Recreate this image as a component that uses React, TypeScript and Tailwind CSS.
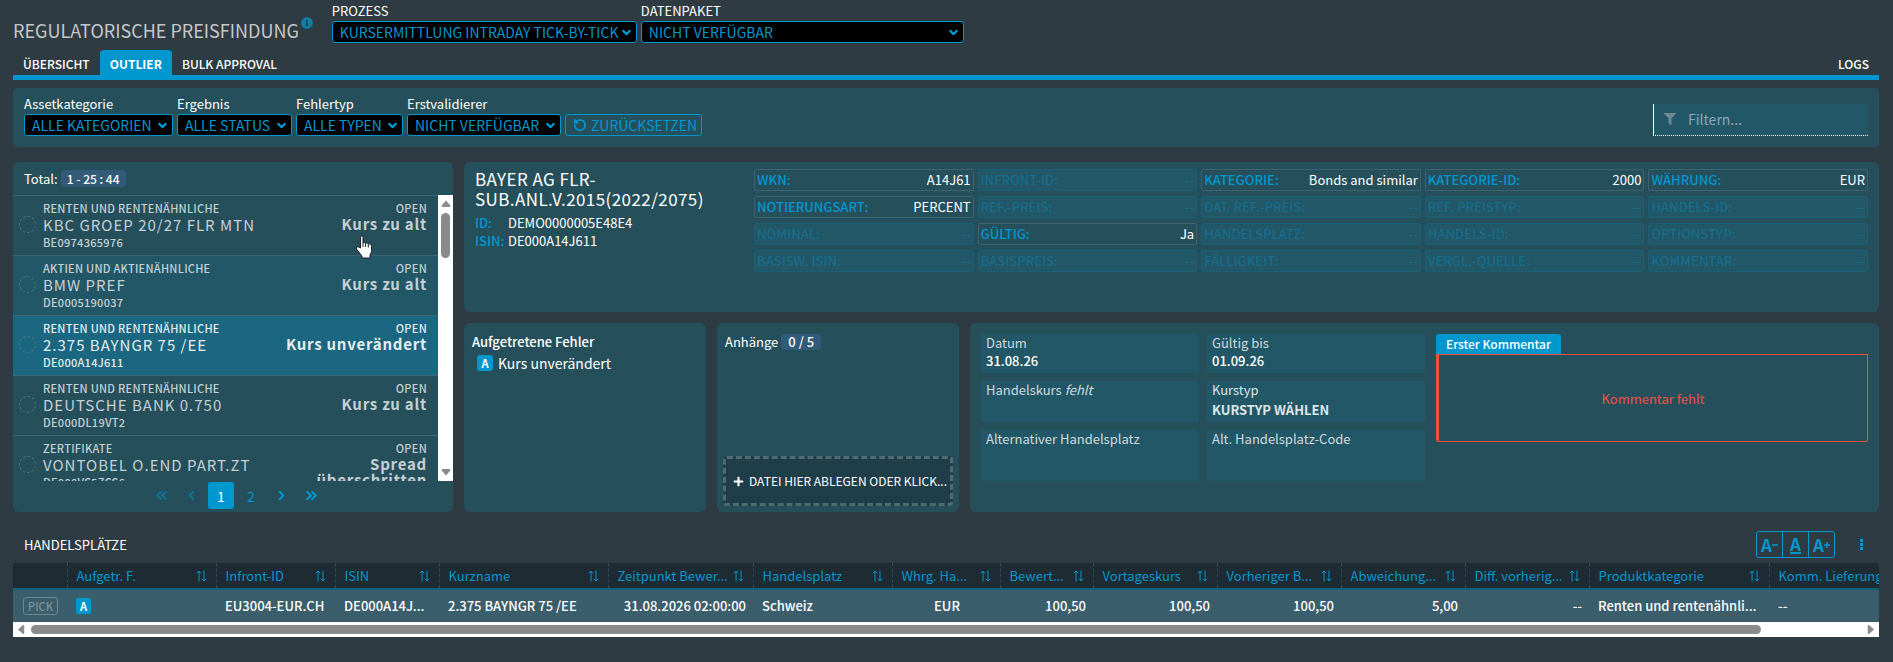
import { useState } from "react";
import type { ReactNode } from "react";
import { clsx } from "clsx";
import { ChevronDown, ChevronLeft, ChevronRight, ChevronsLeft, ChevronsRight, RotateCcw } from "lucide-react";
import { FaFilter, FaInfoCircle, FaPlus } from "react-icons/fa";

const items = [
  { category: "RENTEN UND RENTENÄHNLICHE", name: "KBC GROEP 20/27 FLR MTN", isin: "BE0974365976", error: "Kurs zu alt", tone: "plain" },
  { category: "AKTIEN UND AKTIENÄHNLICHE", name: "BMW PREF", isin: "DE0005190037", error: "Kurs zu alt", tone: "stripe" },
  { category: "RENTEN UND RENTENÄHNLICHE", name: "2.375 BAYNGR 75 /EE", isin: "DE000A14J611", error: "Kurs unverändert", tone: "active" },
  { category: "RENTEN UND RENTENÄHNLICHE", name: "DEUTSCHE BANK 0.750", isin: "DE000DL19VT2", error: "Kurs zu alt", tone: "plain" },
  { category: "ZERTIFIKATE", name: "VONTOBEL O.END PART.ZT", isin: "DE000VS5ZCS6", error: "Spread überschritten", tone: "plain" },
];

const facts = [
  ["WKN", "A14J61"],
  ["INFRONT-ID", ""],
  ["KATEGORIE", "Bonds and similar"],
  ["KATEGORIE-ID", "2000"],
  ["WÄHRUNG", "EUR"],
  ["NOTIERUNGSART", "PERCENT"],
  ["REF.-PREIS", ""],
  ["DAT. REF.-PREIS", ""],
  ["REF. PREISTYP", ""],
  ["HANDELS-ID", ""],
  ["NOMINAL", ""],
  ["GÜLTIG", "Ja"],
  ["HANDELSPLATZ", ""],
  ["HANDELS-ID", ""],
  ["OPTIONSTYP", ""],
  ["BASISW. ISIN", ""],
  ["BASISPREIS", ""],
  ["FÄLLIGKEIT", ""],
  ["VERGL.-QUELLE", ""],
  ["KOMMENTAR", ""],
];

const columns = [
  { title: "Aufgetr. F.", width: "w-[149px]", align: "text-left", value: "A" },
  { title: "Infront-ID", width: "w-[119px]", align: "text-left", value: "EU3004-EUR.CH" },
  { title: "ISIN", width: "w-[104px]", align: "text-left", value: "DE000A14J..." },
  { title: "Kurzname", width: "w-[169px]", align: "text-left", value: "2.375 BAYNGR 75 /EE" },
  { title: "Zeitpunkt Bewer...", width: "w-[145px]", align: "text-right", value: "31.08.2026 02:00:00" },
  { title: "Handelsplatz", width: "w-[139px]", align: "text-left", value: "Schweiz" },
  { title: "Whrg. Ha...", width: "w-[108px]", align: "text-center", value: "EUR" },
  { title: "Bewert...", width: "w-[93px]", align: "text-right", value: "100,50" },
  { title: "Vortageskurs", width: "w-[124px]", align: "text-right", value: "100,50" },
  { title: "Vorheriger B...", width: "w-[124px]", align: "text-right", value: "100,50" },
  { title: "Abweichung...", width: "w-[124px]", align: "text-right", value: "5,00" },
  { title: "Diff. vorherig...", width: "w-[124px]", align: "text-right", value: "--" },
  { title: "Produktkategorie", width: "w-[180px]", align: "text-left", value: "Renten und rentenähnli..." },
  { title: "Komm. Lieferung", width: "w-[180px]", align: "text-left", value: "--" },
];

function Dropdown({ id, label, value, className }: { id: string; label: string; value: string; className: string }) {
  return (
    <div className={clsx("flex flex-col", className)}>
      <label htmlFor={id} className="h-5 text-[13px] leading-[19px]">
        {label}
      </label>
      <div className="relative">
        <select
          id={id}
          className="block h-[22px] w-full appearance-none rounded-[3px] border border-[#0097cf] bg-black pr-3 pl-[7px] text-sm leading-5 text-[#0097cf]"
        >
          <option>{value}</option>
        </select>
        <ChevronDown size={13} strokeWidth={4} className="pointer-events-none absolute top-[5px] right-1 text-[#0097cf]" />
      </div>
    </div>
  );
}

function Tab({ active, children, onClick }: { active?: boolean; children: ReactNode; onClick?: () => void }) {
  return (
    <button
      type="button"
      onClick={onClick}
      className={clsx(
        "h-[25px] rounded-t px-[10px] pt-[3px] text-xs leading-5",
        active ? "bg-[#0097cf] font-bold" : "font-medium",
      )}
    >
      {children}
    </button>
  );
}

function Arrow({ className }: { className?: string }) {
  return (
    <svg viewBox="0 0 10 7" className={clsx("h-[7px] w-[10px] shrink-0 fill-[#8b8b8b]", className)}>
      <path d="M5 0.4 9.4 5.5Q9.6 6.8 8.4 7H1.6Q0.4 6.8 0.6 5.5Z" />
    </svg>
  );
}

function SortIcon() {
  return (
    <svg viewBox="0 0 11 12" className="h-3 w-[11px] shrink-0 fill-none stroke-[#0097cf]">
      <path d="M3 11.5V1M0.8 3.4 3 1 5.2 3.4M8 0.5V11M5.8 8.6 8 11 10.2 8.6" />
    </svg>
  );
}

function ItemList() {
  return (
    <section className="flex w-[440px] shrink-0 flex-col overflow-hidden rounded-md bg-[#264f5c]">
      <div className="flex h-[33px] items-center gap-[3px] px-[11px] text-[13px]">
        <span>Total:</span>
        <span className="rounded-[3px] bg-[#315b78] px-[6px] text-xs leading-[17px] font-medium">1 - 25 : 44</span>
      </div>
      <div className="flex h-[286px]">
        <ul className="min-w-0 flex-1 overflow-hidden">
          {items.map((item) => (
            <li
              key={item.isin}
              className={clsx(
                "flex h-[60px] gap-[7px] border-t border-[#3d6776] pt-1 pr-[11px] pl-[6px]",
                item.tone === "plain" && "bg-[#264f5c] text-[#c5d0d4]",
                item.tone === "stripe" && "bg-[#225767] text-[#c5d0d4]",
                item.tone === "active" && "bg-[#1b6680] text-[#e4edf0]",
              )}
            >
              <input
                type="checkbox"
                aria-label={item.name}
                className="mt-4 size-[17px] shrink-0 appearance-none rounded-full border border-dashed border-[#4d7684]"
              />
              <div className="min-w-0 flex-1">
                <div className="text-[11px] leading-4 font-medium tracking-wide">{item.category}</div>
                <div className="text-[15px] leading-[18px] tracking-[1px] whitespace-nowrap">{item.name}</div>
                <div className="text-[11px] leading-4 font-medium tracking-wide">{item.isin}</div>
              </div>
              <div className="w-[150px] text-right">
                <div className="text-[11px] leading-4 font-medium tracking-wide">OPEN</div>
                <div className="text-[15px] leading-4 font-bold tracking-wider">{item.error}</div>
              </div>
            </li>
          ))}
        </ul>
        <div className="flex w-[15px] flex-col items-center justify-between bg-white py-[5px]">
          <div className="flex flex-col items-center gap-[6px]">
            <Arrow />
            <div className="h-[45px] w-[9px] rounded-full bg-[#8b8b8b]" />
          </div>
          <Arrow className="rotate-180" />
        </div>
      </div>
      <nav aria-label="Seiten" className="flex h-[31px] items-center justify-center gap-1 pb-[2px] pl-[6px] text-sm text-[#0097cf]">
        <button type="button" aria-label="Erste Seite" className="flex w-[26px] justify-center opacity-50">
          <ChevronsLeft size={17} strokeWidth={3} />
        </button>
        <button type="button" aria-label="Vorherige Seite" className="flex w-[26px] justify-center opacity-50">
          <ChevronLeft size={15} strokeWidth={3} />
        </button>
        <button type="button" className="h-[27px] w-[26px] rounded-[3px] bg-[#0097cf] text-white">
          1
        </button>
        <button type="button" className="h-[27px] w-[26px]">
          2
        </button>
        <button type="button" aria-label="Nächste Seite" className="flex w-[26px] justify-center">
          <ChevronRight size={15} strokeWidth={3} />
        </button>
        <button type="button" aria-label="Letzte Seite" className="flex w-[26px] justify-center">
          <ChevronsRight size={17} strokeWidth={3} />
        </button>
      </nav>
    </section>
  );
}

function Details() {
  return (
    <section className="flex h-[150px] rounded-md bg-[#264f5c] px-[11px] pt-[7px]">
      <div className="w-[279px] shrink-0">
        <h2 className="w-[240px] text-[17px] leading-5 tracking-wide">BAYER AG FLR-SUB.ANL.V.2015(2022/2075)</h2>
        <dl className="mt-[5px] grid grid-cols-[33px_1fr] text-[13px] leading-[18px]">
          <dt className="font-medium text-[#0097cf]">ID:</dt>
          <dd>DEMO0000005E48E4</dd>
          <dt className="font-medium text-[#0097cf]">ISIN:</dt>
          <dd>DE000A14J611</dd>
        </dl>
      </div>
      <dl className="grid min-w-0 flex-1 grid-cols-5 content-start gap-x-1 gap-y-[5px] text-[13px]">
        {facts.map(([label, value], i) => (
          <div
            key={i}
            className={clsx(
              "flex h-[22px] items-center justify-between rounded-[2px] border px-[2px] leading-5 whitespace-nowrap",
              value ? "border-[#3e6270]" : "border-[#1b6079] bg-[#225767] text-[#196c8a]",
            )}
          >
            <dt className={clsx("font-medium", value && "text-[#0097cf]")}>{label}:</dt>
            <dd>{value || "--"}</dd>
          </div>
        ))}
      </dl>
    </section>
  );
}

function Field({ id, label, hint, value, className }: { id: string; label: string; hint?: string; value?: string; className: string }) {
  return (
    <div className={clsx("rounded-[3px] bg-[#225767] px-[5px]", className)}>
      <label htmlFor={id} className="block text-[13px] leading-[18px] text-[#d0dade]">
        {label} {hint && <i>{hint}</i>}
      </label>
      <input id={id} defaultValue={value} className="block h-[18px] w-full bg-transparent text-[13px] leading-[18px] font-medium" />
    </div>
  );
}

function Editor() {
  return (
    <div className="flex h-[189px] gap-[11px]">
      <section className="w-[242px] shrink-0 rounded-md bg-[#264f5c] px-2 pt-[9px]">
        <h3 className="text-[13px] leading-5 font-medium">Aufgetretene Fehler</h3>
        <div className="flex items-center gap-[5px] px-[5px] text-sm leading-[22px]">
          <span className="size-4 rounded-[3px] bg-[#0097cf] text-center text-[11px] leading-4 font-bold">A</span>
          Kurs unverändert
        </div>
      </section>

      <section className="flex w-[242px] shrink-0 flex-col justify-between rounded-md bg-[#264f5c] px-[6px] pt-[9px] pb-[6px]">
        <div className="flex items-center gap-[3px] px-[2px] text-[13px] leading-5">
          <h3>Anhänge</h3>
          <span className="rounded-[3px] bg-[#315b78] px-[7px] leading-4 font-medium">0 / 5</span>
        </div>
        <button
          type="button"
          className="flex h-[50px] items-center gap-[5px] rounded border-[3px] border-dashed border-[#4f6a73] bg-[#1f3e4a] px-[7px] text-xs whitespace-nowrap"
        >
          <FaPlus size={11} className="shrink-0" />
          DATEI HIER ABLEGEN ODER KLICK...
        </button>
      </section>

      <section className="grid min-w-0 flex-1 grid-cols-[444fr_432fr] items-start gap-[11px] rounded-md bg-[#264f5c] p-[11px]">
        <div className="grid grid-cols-2 gap-2">
          <Field id="datum" label="Datum" value="31.08.26" className="h-[39px]" />
          <Field id="gueltig" label="Gültig bis" value="01.09.26" className="h-[39px]" />
          <Field id="kurs" label="Handelskurs" hint="fehlt" className="h-[41px]" />
          <div className="h-[41px] rounded-[3px] bg-[#225767] px-[5px]">
            <label htmlFor="kurstyp" className="block text-[13px] leading-[18px] text-[#dde6e9]">
              Kurstyp
            </label>
            <select id="kurstyp" className="block h-[22px] w-full appearance-none text-[13px] leading-[22px] font-bold text-[#dde6e9]">
              <option>KURSTYP WÄHLEN</option>
            </select>
          </div>
          <Field id="alt" label="Alternativer Handelsplatz" className="h-[51px]" />
          <Field id="code" label="Alt. Handelsplatz-Code" className="h-[51px]" />
        </div>
        <div className="flex flex-col items-start">
          <label htmlFor="kommentar" className="h-5 rounded-t-[3px] bg-[#0097cf] px-[10px] text-xs leading-5 font-medium">
            Erster Kommentar
          </label>
          <textarea
            id="kommentar"
            placeholder="Kommentar fehlt"
            className="block h-[88px] w-full resize-none rounded-b-[3px] border border-l-[3px] border-[#f2503f] py-[34px] text-center text-[13px] leading-5 placeholder:text-[#f2503f]"
          />
        </div>
      </section>
    </div>
  );
}

function Venues() {
  return (
    <section className="mt-4">
      <div className="mb-[2px] flex h-[33px] items-center justify-between pr-[14px] pl-[11px]">
        <h2 className="text-[13px] leading-5">HANDELSPLÄTZE</h2>
        <div className="flex items-center gap-[22px] text-[#0097cf]">
          <div className="flex h-[27px] divide-x divide-[#0097cf] rounded-[3px] border border-[#0097cf] text-[17px] leading-6 font-bold">
            <button type="button" aria-label="Schrift kleiner" className="flex w-[26px] items-center justify-center">
              A
              <svg viewBox="0 0 6 6" className="size-[6px] stroke-current stroke-[1.6]">
                <path d="M0 3H6" />
              </svg>
            </button>
            <button type="button" aria-label="Schrift normal" className="flex w-[26px] items-center justify-center">
              <span className="h-[18px] border-b-2 leading-[15px]">A</span>
            </button>
            <button type="button" aria-label="Schrift größer" className="flex w-[25px] items-center justify-center">
              A
              <svg viewBox="0 0 6 6" className="size-[6px] stroke-current stroke-[1.6]">
                <path d="M0 3H6M3 0V6" />
              </svg>
            </button>
          </div>
          <button type="button" aria-label="Menü" className="flex w-2 flex-col items-center gap-px">
            <span className="size-[3px] bg-current" />
            <span className="size-[3px] bg-current" />
            <span className="size-[3px] bg-current" />
          </button>
        </div>
      </div>
      <div className="overflow-hidden">
        <table className="w-[1936px] table-fixed border-collapse text-[13px]">
          <thead className="bg-[#1e2b33] text-[#0097cf]">
            <tr className="h-[26px] border-b-2 border-[#105f78]">
              <th className="w-[54px]" />
              {columns.map((c) => (
                <th key={c.title} className={clsx("border-l border-dashed border-l-[#24505f] px-[9px] font-normal", c.width)}>
                  <div className="flex items-center justify-between gap-1">
                    <span className="leading-5 whitespace-nowrap">{c.title}</span>
                    <SortIcon />
                  </div>
                </th>
              ))}
            </tr>
          </thead>
          <tbody>
            <tr className="h-[33px] bg-[#3a5e6b] font-medium">
              <td className="pl-[10px]">
                <button type="button" disabled className="h-[18px] w-[35px] rounded-[3px] border border-[#6f8891] text-[11px] leading-4 text-[#7c939b]">
                  PICK
                </button>
              </td>
              {columns.map((c) => (
                <td key={c.title} className={clsx("pr-[7px] pl-[9px] leading-5 whitespace-nowrap", c.align)}>
                  {c.value === "A" ? (
                    <span className="block w-[15px] rounded-[2px] bg-[#0097cf] text-center text-[11px] leading-4 font-bold">A</span>
                  ) : (
                    c.value
                  )}
                </td>
              ))}
            </tr>
          </tbody>
        </table>
      </div>
      <div className="flex h-[15px] items-center gap-[5px] bg-white px-[3px]">
        <Arrow className="-rotate-90" />
        <div className="mr-[100px] h-[9px] flex-1 rounded-full bg-[#8b8b8b]" />
        <Arrow className="rotate-90" />
      </div>
    </section>
  );
}

export default function App() {
  const [tab, setTab] = useState("OUTLIER");

  return (
    <div className="relative min-h-screen bg-[#2f3b42] pr-[14px] pb-4 pl-[13px] font-['Noto_Sans_CJK_SC','Noto_Sans',sans-serif] text-white">
      <header className="flex h-[50px] items-start gap-[19px] pt-px">
        <div className="flex gap-[2px] pt-4">
          <h1 className="text-[18px] leading-[26px] text-[#c4c8ca]">REGULATORISCHE PREISFINDUNG</h1>
          <FaInfoCircle size={12} className="text-[#0e7fa9]" />
        </div>
        <div className="flex gap-1">
          <Dropdown id="prozess" label="PROZESS" value="KURSERMITTLUNG INTRADAY TICK-BY-TICK" className="w-[305px]" />
          <Dropdown id="paket" label="DATENPAKET" value="NICHT VERFÜGBAR" className="w-[323px]" />
        </div>
      </header>

      <nav className="flex justify-between border-b-[5px] border-[#0097cf]">
        <div className="flex">
          {["ÜBERSICHT", "OUTLIER", "BULK APPROVAL"].map((name) => (
            <Tab key={name} active={tab === name} onClick={() => setTab(name)}>
              {name}
            </Tab>
          ))}
        </div>
        <Tab>LOGS</Tab>
      </nav>

      <section className="mt-2 flex h-[59px] justify-between rounded bg-[#264f5c] px-[11px]">
        <div className="flex items-start gap-1 pt-[6px]">
          <Dropdown id="asset" label="Assetkategorie" value="ALLE KATEGORIEN" className="w-[149px]" />
          <Dropdown id="ergebnis" label="Ergebnis" value="ALLE STATUS" className="w-[115px]" />
          <Dropdown id="fehlertyp" label="Fehlertyp" value="ALLE TYPEN" className="w-[107px]" />
          <Dropdown id="validierer" label="Erstvalidierer" value="NICHT VERFÜGBAR" className="w-[154px]" />
          <button
            type="button"
            className="mt-5 flex h-[22px] w-[137px] items-center gap-1 rounded-[3px] border border-[#0097cf] px-[7px] text-sm leading-5 text-[#0097cf]"
          >
            <RotateCcw size={14} strokeWidth={3} className="shrink-0" />
            ZURÜCKSETZEN
          </button>
        </div>
        <label className="mt-4 flex h-8 w-[215px] items-center gap-3 border-b border-l border-dotted border-white bg-[#225767] px-[10px] pb-[2px] [border-left-style:solid]">
          <FaFilter size={12} className="text-[#6f8992]" />
          <input type="search" aria-label="Filtern" placeholder="Filtern..." className="h-5 min-w-0 flex-1 text-sm placeholder:text-[#8fa9b2]" />
        </label>
      </section>

      <main className="mt-[15px] flex gap-[11px]">
        <ItemList />
        <div className="flex min-w-0 flex-1 flex-col gap-[11px]">
          <Details />
          <Editor />
        </div>
      </main>

      <Venues />

      {/* hand pointer over the first row */}
      <svg viewBox="0 0 18 24" className="pointer-events-none absolute top-[235px] left-[355px] h-6 w-[18px] fill-white stroke-[#1a1f2e]">
        <path d="M5.5 13V2.6Q5.5 1 6.8 1 8 1 8 2.6V8.5Q8 7.2 9.3 7.2 10.6 7.2 10.6 8.8 10.8 7.8 12 7.8 13.3 7.8 13.3 9.6 13.5 8.8 14.6 8.8 16.5 8.8 16.5 11.5V15.5Q16.5 18 15 20V23H7V21L2 14.8Q0.8 12.8 1.8 12 3 11.2 4.2 12.4Z" />
        <path d="M8 8.5V12M10.6 8.8V12M13.3 9.6V12.5" />
      </svg>
    </div>
  );
}
